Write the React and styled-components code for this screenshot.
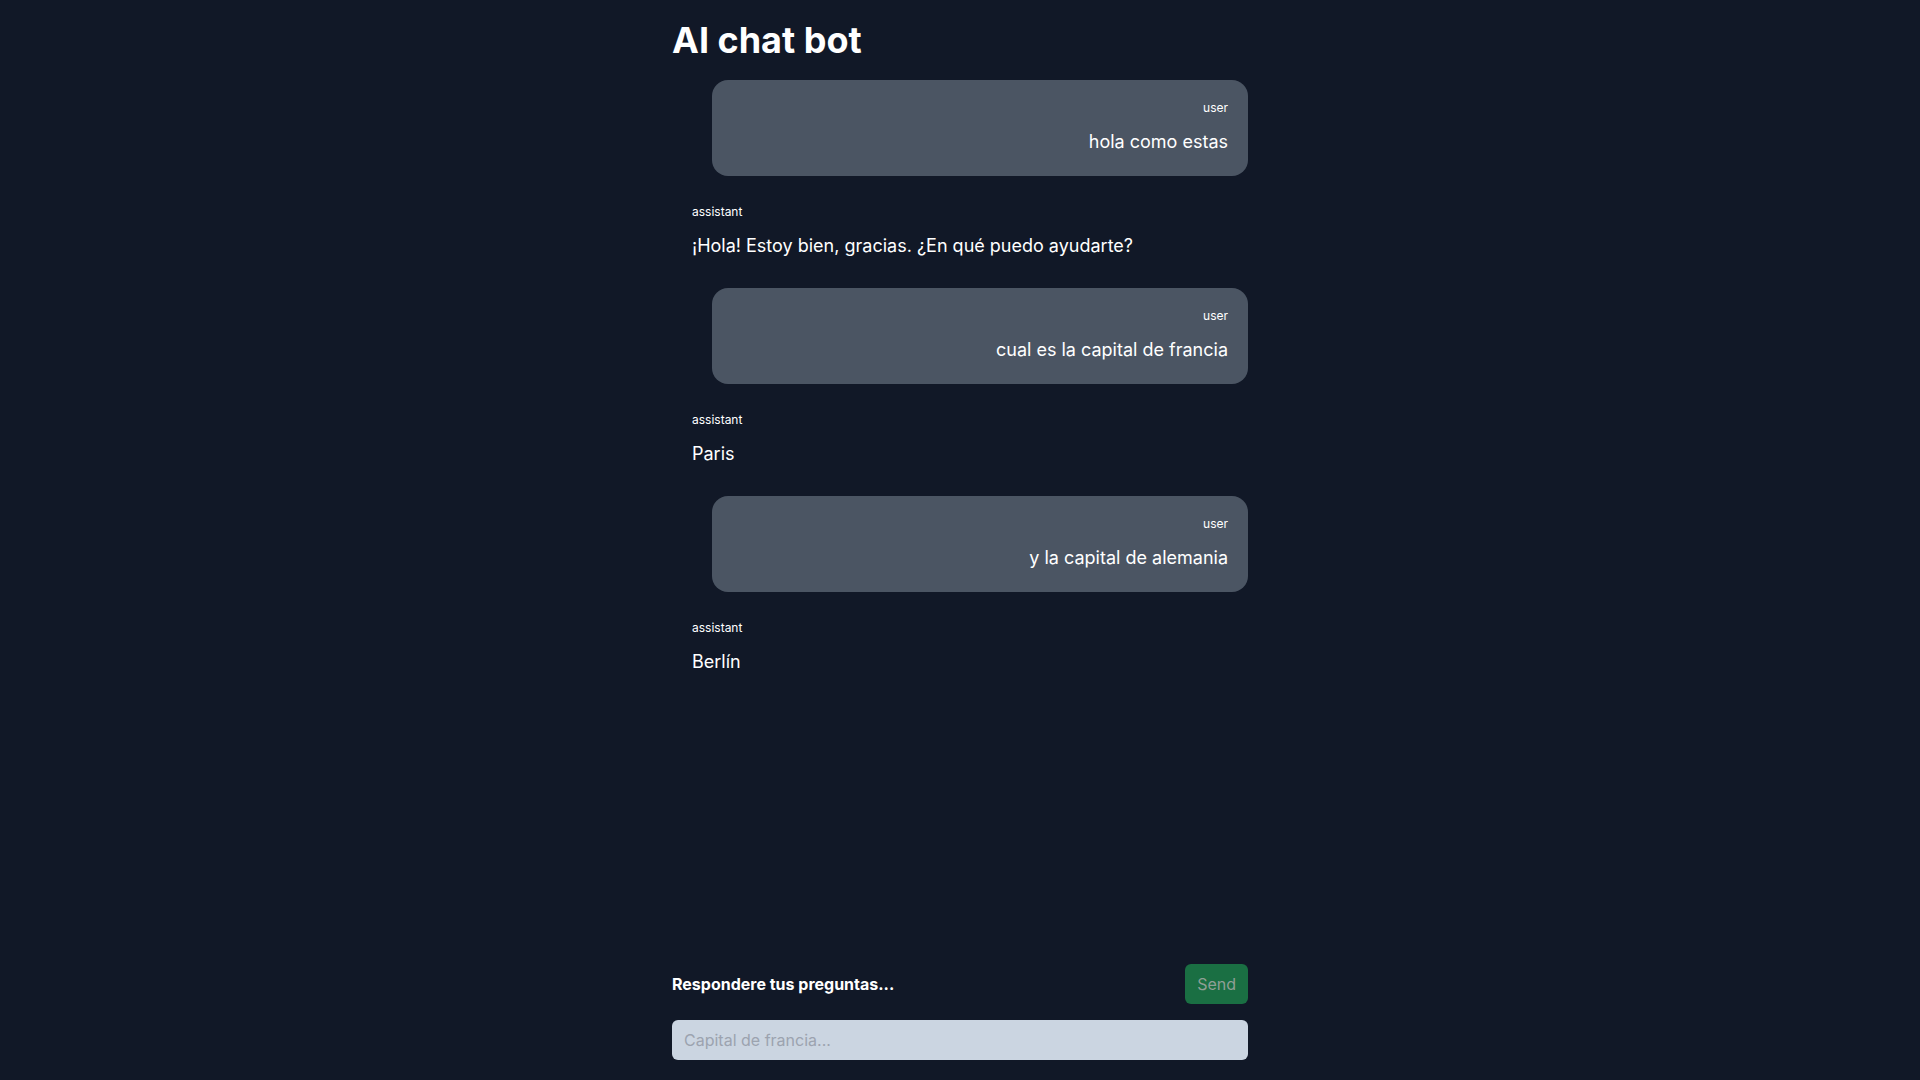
import React from "react";
import styled, { createGlobalStyle } from "styled-components";

const GlobalStyle = createGlobalStyle`
  * {
    box-sizing: border-box;
  }

  body {
    margin: 0;
    background-color: #111827;
    color: #ffffff;
    font-family: Inter, "Noto Sans", "Liberation Sans", sans-serif;
  }
`;

const Page = styled.main`
  width: 576px;
  min-height: 100vh;
  margin: 0 auto;
  padding: 20px 0 20px;
  display: flex;
  flex-direction: column;
`;

const Title = styled.h1`
  margin: 0 0 20px;
  font-size: 36px;
  line-height: 40px;
  font-weight: 700;
`;

const MessageList = styled.div`
  flex: 1;
  display: flex;
  flex-direction: column;
  gap: 8px;
`;

const Message = styled.div`
  padding: 20px;
  border-radius: 16px;
  text-align: ${(props) => (props.$role === "user" ? "right" : "left")};
  background-color: ${(props) =>
    props.$role === "user" ? "#4b5563" : "transparent"};
  margin-left: ${(props) => (props.$role === "user" ? "40px" : "0")};
`;

const Role = styled.div`
  font-size: 12px;
  line-height: 16px;
  margin-bottom: 12px;
`;

const Content = styled.p`
  margin: 0;
  font-size: 18px;
  line-height: 28px;
`;

const Footer = styled.form`
  display: flex;
  flex-direction: column;
  gap: 16px;
`;

const FooterRow = styled.div`
  display: flex;
  justify-content: space-between;
  align-items: center;
`;

const Hint = styled.span`
  font-size: 16px;
  font-weight: 700;
  line-height: 24px;
`;

const SendButton = styled.button`
  font-family: inherit;
  font-size: 16px;
  line-height: 24px;
  padding: 8px 12px;
  border: none;
  border-radius: 6px;
  background-color: #1a6f43;
  color: #8f9f96;
  cursor: pointer;
`;

const Input = styled.input`
  width: 100%;
  height: 40px;
  padding: 8px 12px;
  border: none;
  border-radius: 6px;
  background-color: #cbd5e1;
  color: #111827;
  font-family: inherit;
  font-size: 16px;
  outline: none;

  &::placeholder {
    color: #9ca3af;
  }
`;

const messages = [
  { id: 1, role: "user", content: "hola como estas" },
  {
    id: 2,
    role: "assistant",
    content: "¡Hola! Estoy bien, gracias. ¿En qué puedo ayudarte?",
  },
  { id: 3, role: "user", content: "cual es la capital de francia" },
  { id: 4, role: "assistant", content: "Paris" },
  { id: 5, role: "user", content: "y la capital de alemania" },
  { id: 6, role: "assistant", content: "Berlín" },
];

const App = () => {
  return (
    <>
      <GlobalStyle />
      <Page>
        <Title>AI chat bot</Title>
        <MessageList>
          {messages.map((m) => (
            <Message key={m.id} $role={m.role}>
              <Role>{m.role}</Role>
              <Content>{m.content}</Content>
            </Message>
          ))}
        </MessageList>
        <Footer onSubmit={(e) => e.preventDefault()}>
          <FooterRow>
            <Hint>Respondere tus preguntas...</Hint>
            <SendButton type="submit">Send</SendButton>
          </FooterRow>
          <Input placeholder="Capital de francia..." />
        </Footer>
      </Page>
    </>
  );
};

export default App;
